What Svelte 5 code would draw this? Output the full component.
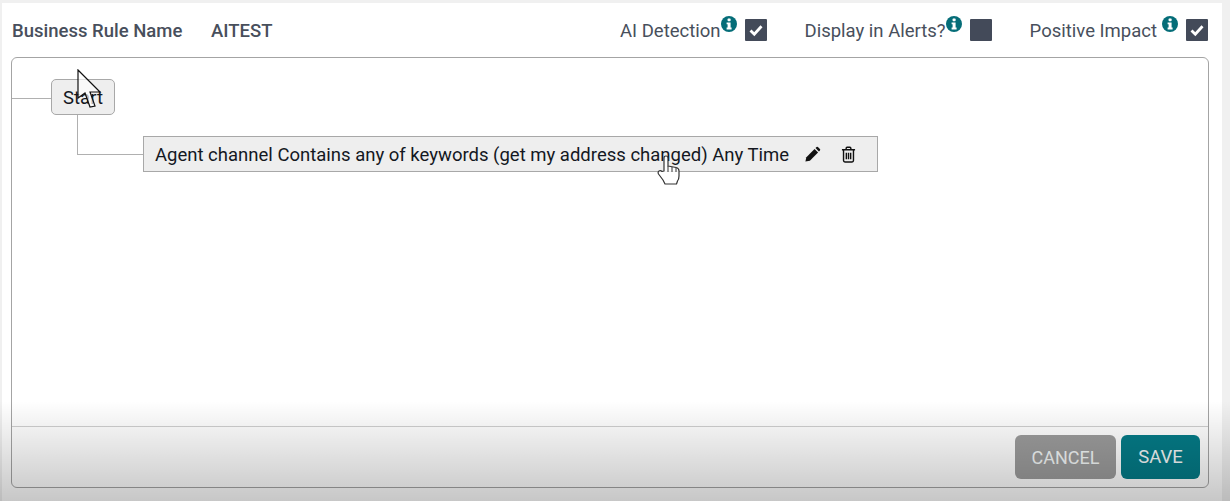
<script>
  const flags = [
    { label: 'AI Detection', checked: true, gap: false },
    { label: 'Display in Alerts?', checked: false, gap: false },
    { label: 'Positive Impact', checked: true, gap: true }
  ];
</script>

<div class="page">
  <div class="panel">
    <header class="head">
      <span class="rule-label">Business Rule Name</span>
      <span class="rule-name">AITEST</span>
      <div class="flags">
        {#each flags as flag}
          <div class="flag">
            <span class="flag-label" class:spaced={flag.gap}>{flag.label}</span>
            <svg class="info" viewBox="0 0 16 16" aria-hidden="true">
              <circle cx="8" cy="8" r="8" fill="#056d78" />
              <rect x="6.6" y="2.6" width="3" height="2.6" rx="0.6" fill="#fff" />
              <path d="M5.6 6.4h4v5.2h1v1.8H5.6v-1.8h1V8.200h-1z" fill="#fff" />
            </svg>
            <span class="check">
              {#if flag.checked}
                <svg viewBox="0 0 22 22" aria-hidden="true">
                  <path d="M5.500 11.500l3.800 3.800 7.200-8" fill="none" stroke="#fff" stroke-width="2.800" />
                </svg>
              {/if}
            </span>
          </div>
        {/each}
      </div>
    </header>

    <section class="canvas">
      <div class="tree">
        <div class="start"><span class="node-text">Start</span></div>
        <div class="rule">
          <span class="node-text">Agent channel Contains any of keywords (get my address changed) Any Time</span>
          <svg class="tool pencil" viewBox="0 0 18 18" aria-hidden="true">
            <path d="M1.500 16.500l1-4.700 8.700-8.700 3.700 3.700-8.700 8.700z" fill="#111" />
            <path d="M12.200 2.200l1.100-1.100q.7-.6 1.400 0l2.200 2.200q.6.700 0 1.400l-1.100 1.100z" fill="#111" />
          </svg>
          <svg class="tool trash" viewBox="0 0 16 18" aria-hidden="true">
            <path d="M1 4h14M5.500 4V2.300q0-1 1-1h3q1 0 1 1V4M2.700 4v11.500q0 1.500 1.500 1.500h7.600q1.500 0 1.500-1.500V4M5.700 7v7M8 7v7M10.300 7v7" fill="none" stroke="#111" stroke-width="1.500" />
          </svg>
        </div>
      </div>
      <footer class="actions">
        <button class="btn cancel">CANCEL</button>
        <button class="btn save">SAVE</button>
      </footer>
    </section>
  </div>

  <div class="fade"></div>

  <svg class="cursor arrow" viewBox="0 0 26 40" aria-hidden="true">
    <path d="M1 1L23 23H13L18 37L13 38L8 24L1 29z" fill="#fff" fill-opacity="0.65" stroke="#111" stroke-width="1.200" />
  </svg>
  <svg class="cursor hand" viewBox="0 0 24 30" aria-hidden="true">
    <path d="M7 16V3q0-2 2-2t2 2v8l8 1.500q3 .7 3 3.500v5q0 3-1.500 5l-1 3H8l-2-4-4.500-6q-1-2 .5-3t3 .5z" fill="#fff" fill-opacity="0.85" stroke="#333" stroke-width="1.200" stroke-linejoin="round" />
    <path d="M11 11v6M15 12v5M19 13v4" fill="none" stroke="#333" stroke-width="1" />
  </svg>
</div>

<style>
  :global(body) {
    margin: 0;
    background: #f0f0f0;
  }

  .page {
    position: relative;
    width: 1230px;
    height: 501px;
    overflow: hidden;
    box-sizing: border-box;
    padding: 3px 8px 0 2px;
    font-family: Roboto, "Liberation Sans", sans-serif;
  }

  .panel {
    height: 498px;
    background: #fff;
    box-sizing: border-box;
    padding: 0 13px 0 9px;
  }

  .head {
    height: 54px;
    display: flex;
    align-items: center;
    color: #484f5c;
    font-size: 18.5px;
  }

  .rule-label {
    font-weight: 500;
    width: 199px;
    margin: 1px 0 0 1px;
  }

  .rule-name {
    font-weight: 500;
    margin-top: 1px;
  }

  .flags {
    margin-left: auto;
    display: flex;
    gap: 38px;
    padding-right: 1px;
  }

  .flag {
    display: flex;
    align-items: center;
    position: relative;
  }

  .flag-label {
    margin-top: 1px;
  }

  .flag-label.spaced {
    margin-right: 5px;
  }

  .info {
    width: 16px;
    height: 16px;
    margin: -12px 8px 0 0;
  }

  .check {
    width: 22px;
    height: 22px;
    background: #434a59;
    border-radius: 1px;
  }

  .check svg {
    display: block;
  }

  .canvas {
    height: 431px;
    box-sizing: border-box;
    border: 1px solid #a4a4a4;
    border-radius: 6px;
    display: flex;
    flex-direction: column;
  }

  .tree {
    flex: 1;
    padding: 21px 0 0 39px;
    color: #14181f;
    font-size: 18.5px;
  }

  .node-text {
    margin-top: 2px;
  }

  .start {
    position: relative;
    width: 64px;
    height: 36px;
    box-sizing: border-box;
    border: 1px solid #a8a8a8;
    border-radius: 5px;
    background: #eee;
    display: flex;
    align-items: center;
    justify-content: center;
  }

  /* connector coming in from the canvas edge */
  .start::before {
    content: "";
    position: absolute;
    left: -40px;
    top: 18px;
    width: 39px;
    border-top: 1px solid #b0b0b0;
  }

  .rule {
    position: relative;
    margin: 21px 0 0 92px;
    width: 735px;
    height: 36px;
    box-sizing: border-box;
    border: 1px solid #a8a8a8;
    background: #eee;
    display: flex;
    align-items: center;
    padding-left: 11px;
    white-space: nowrap;
  }

  /* elbow from the start node */
  .rule::before {
    content: "";
    position: absolute;
    left: -67px;
    top: -22px;
    width: 66px;
    height: 40px;
    border-left: 1px solid #b0b0b0;
    border-bottom: 1px solid #b0b0b0;
    box-sizing: border-box;
  }

  .tool {
    flex: none;
  }

  .pencil {
    width: 17px;
    height: 17px;
    margin: 1px 0 0 15px;
  }

  .trash {
    width: 15px;
    height: 17px;
    margin: 1px 0 0 20px;
  }

  .actions {
    height: 61px;
    box-sizing: border-box;
    border-top: 1px solid #d0d0d0;
    display: flex;
    justify-content: flex-end;
    gap: 5px;
    padding: 8px 8px 0 0;
  }

  .btn {
    height: 44px;
    border: none;
    border-radius: 6px;
    color: #f4f8f8;
    font-family: inherit;
    font-size: 18px;
    padding: 0;
  }

  .cancel {
    width: 101px;
    background: #9c9c9c;
  }

  .save {
    width: 79px;
    background: #047b87;
    font-size: 18.5px;
  }

  /* video player shadow over the lower part of the frame */
  .fade {
    position: absolute;
    left: 0;
    right: 0;
    bottom: 0;
    height: 100px;
    background: linear-gradient(to bottom, rgba(0, 0, 0, 0), rgba(0, 0, 0, 0.22));
    pointer-events: none;
  }

  .cursor {
    position: absolute;
    pointer-events: none;
  }

  .arrow {
    left: 77px;
    top: 69px;
    width: 26px;
    height: 40px;
  }

  .hand {
    left: 657px;
    top: 155px;
    width: 24px;
    height: 30px;
  }
</style>
